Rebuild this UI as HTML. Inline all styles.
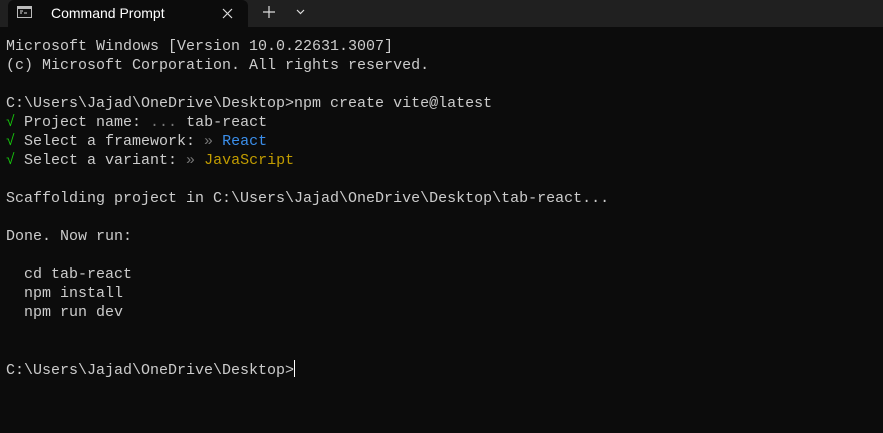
<!DOCTYPE html>
<html><head><style>
html,body{margin:0;padding:0;width:883px;height:433px;background:#0c0c0c;overflow:hidden}
.bar{position:absolute;left:0;top:0;width:883px;height:27px;background:#202020}
.tab{position:absolute;left:8px;top:0;width:240px;height:27px;background:#0c0c0c;border-radius:6px 6px 0 0}
.title{position:absolute;left:43px;top:5px;font:400 14px "Liberation Sans",sans-serif;color:#fff}
.term{position:absolute;left:6px;top:37px;font:15px/19px "Liberation Mono",monospace;color:#cccccc;white-space:pre;letter-spacing:0}
.g{color:#16c60c}.d{color:#767676}.b{color:#3b8eea}.y{color:#c19c00}
.cur{display:inline-block;width:1px;height:17px;background:#fff;vertical-align:-3px}
</style></head><body>
<div class="bar"></div>
<div class="tab">
<svg style="position:absolute;left:9px;top:6px" width="15" height="12"><rect x="0.5" y="0.5" width="14" height="11" fill="#111" stroke="#bbb"/><rect x="1" y="1" width="13" height="2" fill="#bbb"/><path d="M3 5h3M3 7h2M7 7h3" stroke="#ddd"/></svg>
<div class="title">Command Prompt</div>
<svg style="position:absolute;left:214px;top:8px" width="11" height="11"><path d="M1 1L10 10M10 1L1 10" stroke="#ddd" stroke-width="1.2"/></svg>
</div>
<svg style="position:absolute;left:263px;top:6px" width="12" height="12"><path d="M6 0V12M0 6H12" stroke="#ddd" stroke-width="1.2"/></svg>
<svg style="position:absolute;left:296px;top:9px" width="9" height="6"><path d="M1 1L4.5 4.5L8 1" stroke="#ddd" fill="none" stroke-width="1.2"/></svg>
<div class="term">Microsoft Windows [Version 10.0.22631.3007]
(c) Microsoft Corporation. All rights reserved.

C:\Users\Jajad\OneDrive\Desktop>npm create vite@latest
<span class="g">√</span> Project name: <span class="d">...</span> tab-react
<span class="g">√</span> Select a framework: <span class="d">»</span> <span class="b">React</span>
<span class="g">√</span> Select a variant: <span class="d">»</span> <span class="y">JavaScript</span>

Scaffolding project in C:\Users\Jajad\OneDrive\Desktop\tab-react...

Done. Now run:

  cd tab-react
  npm install
  npm run dev


C:\Users\Jajad\OneDrive\Desktop><span class="cur"></span></div>
</body></html>
